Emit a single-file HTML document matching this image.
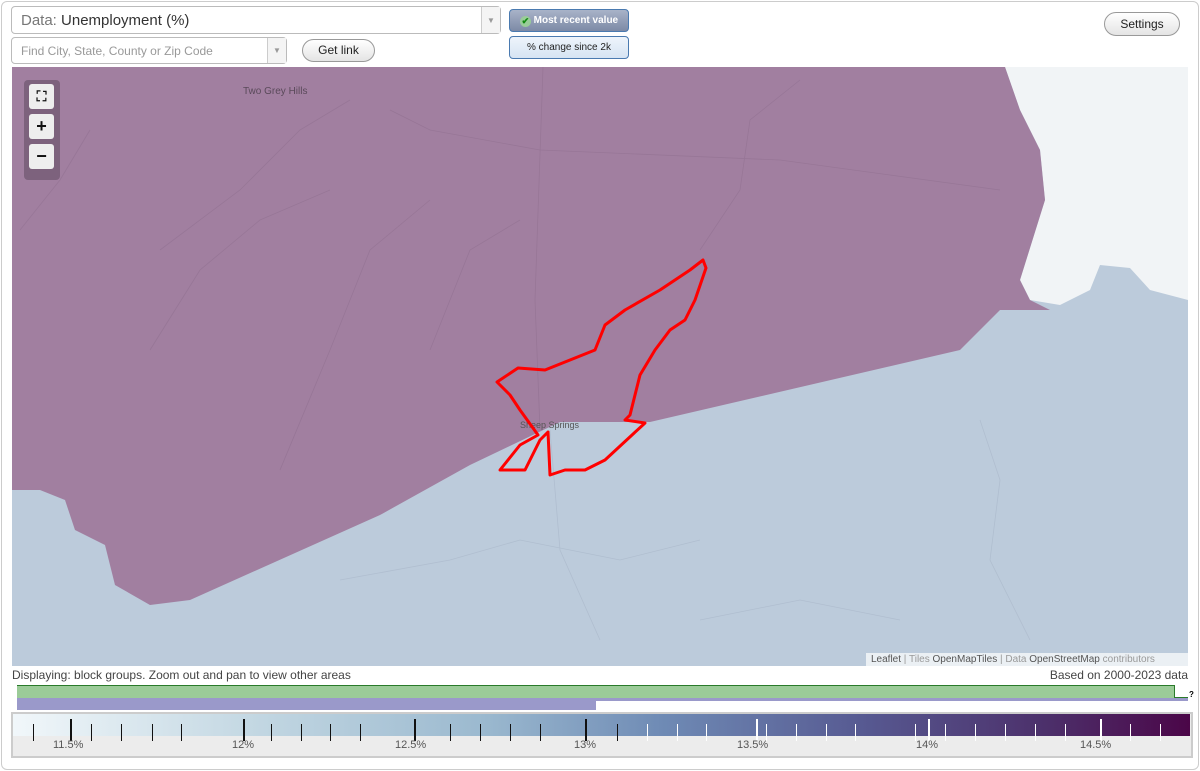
<!DOCTYPE html>
<html><head><style>
body{margin:0;width:1200px;height:771px;background:#fff;font-family:"Liberation Sans",sans-serif;position:relative;overflow:hidden}
.frame{position:absolute;left:1px;top:1px;width:1196px;height:767px;border:1px solid #ccc;border-radius:6px}
.sel{position:absolute;background:#fff;border:1px solid #bbb;border-radius:4px;box-sizing:border-box;color:#555}
.arrow{position:absolute;right:0;top:0;bottom:0;width:18px;border-left:1px solid #ccc;background:#f4f4f4;color:#999;font-size:8px;text-align:center}
.btn{position:absolute;border:1px solid #999;border-radius:12px;background:linear-gradient(#fff,#e4e4e4);font-size:12px;text-align:center;color:#222;box-sizing:border-box}
.tb{position:absolute;border:1px solid #4a7ab0;border-radius:4px;box-sizing:border-box;font-size:10px;text-align:center}
.ctl{position:absolute;left:24px;width:36px;background:rgba(90,70,90,.5);border-radius:4px}
.cb{position:absolute;left:5px;width:25px;height:25px;background:#eee;border-radius:3px;text-align:center;font-weight:bold;font-size:18px;line-height:25px;color:#111}
.tick{position:absolute;width:1px;height:17px;top:724px;background:#111}
.tick.b{width:2px;height:22px;top:719px}
.tick.w{background:#fff}
.lab{position:absolute;top:739px;font-size:11px;color:#555}
</style></head><body>
<div class="frame"></div>
<div class="sel" style="left:11px;top:6px;width:490px;height:28px;font-size:15px;line-height:27px;padding-left:9px"><span style="color:#777">Data:</span> <span style="color:#333">Unemployment (%)</span><div class="arrow" style="line-height:27px">▼</div></div>
<div class="sel" style="left:11px;top:37px;width:276px;height:27px;font-size:12px;line-height:26px;padding-left:9px;color:#999">Find City, State, County or Zip Code<div class="arrow" style="line-height:26px">▼</div></div>
<div class="btn" style="left:302px;top:39px;width:73px;height:23px;line-height:21px">Get link</div>
<div class="tb" style="left:509px;top:9px;width:120px;height:23px;line-height:21px;background:linear-gradient(#a8b3c8,#7d8aa6);color:#fff;font-weight:bold"><span style="display:inline-block;width:11px;height:11px;border-radius:6px;background:#9c9;color:#181;font-size:9px;line-height:11px;vertical-align:-1px">✔</span> Most recent value</div>
<div class="tb" style="left:509px;top:36px;width:120px;height:23px;line-height:21px;background:linear-gradient(#eef4fb,#d6e4f3);color:#222">% change since 2k</div>
<div class="btn" style="left:1104px;top:12px;width:76px;height:24px;line-height:22px">Settings</div>

<svg style="position:absolute;left:12px;top:67px" width="1176" height="599" viewBox="12 67 1176 599">
<rect x="12" y="67" width="1176" height="599" fill="#bccbdb"/>
<polygon points="1005,67 1188,67 1188,300 1150,290 1130,268 1100,265 1090,290 1060,305 1030,300 1020,280 1045,200 1040,150 1020,110" fill="#f1f4f6"/>
<polygon points="12,67 1005,67 1020,110 1040,150 1045,200 1020,280 1030,300 1050,310 1000,310 960,350 650,422 560,422 470,465 380,515 190,600 150,605 115,585 105,545 75,530 65,500 40,490 12,490" fill="#a17fa0"/>
<g stroke="#8e6e8e" stroke-width=".8" fill="none" opacity=".5">
<path d="M543,67 L535,300 L540,430"/><path d="M390,110 L430,130 L540,150 L780,160 L1000,190"/>
<path d="M160,250 L240,190 L300,130 L350,100"/><path d="M150,350 L200,270 L260,220 L330,190"/>
<path d="M280,470 L330,350 L370,250 L430,200"/><path d="M430,350 L470,250 L520,220"/>
<path d="M700,250 L740,190 L750,120 L800,80"/><path d="M20,230 L60,180 L90,130"/>
</g>
<g stroke="#a8b6c8" stroke-width=".8" fill="none" opacity=".6">
<path d="M550,430 L560,550 L600,640"/><path d="M340,580 L450,560 L520,540 L620,560 L700,540"/>
<path d="M980,420 L1000,480 L990,560 L1030,640"/><path d="M700,620 L800,600 L900,620"/>
</g>
<text x="243" y="94" font-size="10" fill="#5a4a5a">Two Grey Hills</text>
<text x="520" y="428" font-size="9" fill="#555">Sheep Springs</text>
<polygon points="703,260 706,268 695,300 685,320 670,330 655,350 640,375 635,395 630,415 625,420 645,423 605,460 585,470 565,470 550,475 548,432 540,440 530,460 525,470 500,470 520,445 538,435 520,410 510,395 497,382 518,368 545,370 570,360 595,350 605,325 625,310 660,290 690,270" fill="none" stroke="#f00" stroke-width="3" stroke-linejoin="round"/>
</svg>
<div class="ctl" style="top:80px;height:100px">
<div class="cb" style="top:4px;font-size:14px">⛶</div><div class="cb" style="top:34px">+</div><div class="cb" style="top:64px">−</div></div>
<div style="position:absolute;left:866px;top:653px;width:322px;height:13px;background:rgba(255,255,255,.7);font-size:10px;color:#999;padding-left:5px;line-height:13px"><span style="color:#555">Leaflet</span> | Tiles <span style="color:#555">OpenMapTiles</span> | Data <span style="color:#555">OpenStreetMap</span> contributors</div>
<div style="position:absolute;left:12px;top:668px;font-size:12px;color:#444">Displaying: block groups. Zoom out and pan to view other areas</div>
<div style="position:absolute;right:12px;top:668px;font-size:12px;color:#444">Based on 2000-2023 data</div>
<div style="position:absolute;left:17px;top:685px;width:1157px;height:12px;background:#9bcb98;border-top:1px solid #2a7a2a;border-right:1px solid #2a7a2a"></div>
<div style="position:absolute;left:1175px;top:697px;width:13px;height:1px;background:#2a7a2a"></div>
<div style="position:absolute;left:1189px;top:690px;font-size:8px;font-weight:bold">?</div>
<div style="position:absolute;left:17px;top:698px;width:579px;height:12px;background:#9a99ca"></div>
<div style="position:absolute;left:596px;top:698px;width:592px;height:3px;background:#9a99ca"></div>
<div style="position:absolute;left:11px;top:712px;width:1178px;height:42px;border:2px solid #ccc;background:#ececec"></div>
<div style="position:absolute;left:13px;top:714px;width:1177px;height:22px;background:linear-gradient(90deg,#f1f7fa,#c4d8e3 20%,#9bb9cf 40%,#6f8bb5 55%,#575a92 72%,#4c2f6a 88%,#4b0648)"></div>
<div class="tick" style="left:33px"></div><div class="tick b" style="left:70px"></div><div class="tick" style="left:91px"></div><div class="tick" style="left:121px"></div><div class="tick" style="left:152px"></div><div class="tick" style="left:181px"></div><div class="tick b" style="left:243px"></div><div class="tick" style="left:271px"></div><div class="tick" style="left:301px"></div><div class="tick" style="left:330px"></div><div class="tick" style="left:360px"></div><div class="tick b" style="left:414px"></div><div class="tick" style="left:450px"></div><div class="tick" style="left:480px"></div><div class="tick" style="left:510px"></div><div class="tick" style="left:540px"></div><div class="tick b" style="left:585px"></div><div class="tick" style="left:617px"></div><div class="tick w" style="left:647px"></div><div class="tick w" style="left:677px"></div><div class="tick w" style="left:706px"></div><div class="tick b w" style="left:756px"></div><div class="tick w" style="left:766px"></div><div class="tick w" style="left:796px"></div><div class="tick w" style="left:826px"></div><div class="tick w" style="left:855px"></div><div class="tick b w" style="left:928px"></div><div class="tick w" style="left:915px"></div><div class="tick w" style="left:945px"></div><div class="tick w" style="left:975px"></div><div class="tick w" style="left:1005px"></div><div class="tick w" style="left:1035px"></div><div class="tick b w" style="left:1100px"></div><div class="tick w" style="left:1065px"></div><div class="tick w" style="left:1130px"></div><div class="tick w" style="left:1160px"></div>
<div class="lab" style="left:53px">11.5%</div><div class="lab" style="left:232px">12%</div><div class="lab" style="left:395px">12.5%</div><div class="lab" style="left:574px">13%</div><div class="lab" style="left:737px">13.5%</div><div class="lab" style="left:916px">14%</div><div class="lab" style="left:1080px">14.5%</div>
</body></html>
